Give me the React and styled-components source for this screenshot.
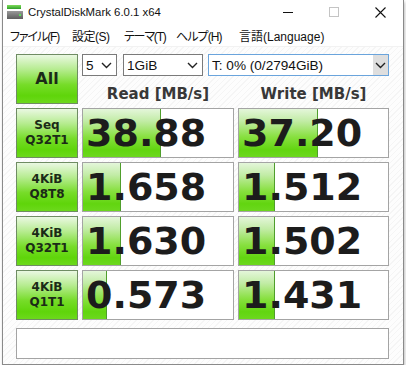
import React from 'react';
import styled, { createGlobalStyle } from 'styled-components';

const GlobalStyle = createGlobalStyle`
  html, body {
    margin: 0;
    padding: 0;
    background: #ffffff;
  }
  body {
    font-family: "Liberation Sans", "Noto Sans CJK JP", sans-serif;
  }
`;

const Window = styled.div`
  width: 400px;
  height: 364px;
  margin-left: 2px;
  border: 1px solid #8a8a8a;
  border-top: none;
  background: #ffffff;
  box-shadow: 1px 2px 3px rgba(0, 0, 0, 0.25);
  display: flex;
  flex-direction: column;
  overflow: hidden;
`;

const TitleBar = styled.div`
  flex: none;
  height: 24px;
  display: flex;
  align-items: center;
  padding-left: 3px;
`;

const Title = styled.span`
  margin-left: 4px;
  font-family: "Liberation Sans", sans-serif;
  font-size: 11.4px;
  color: #111;
`;

const Controls = styled.div`
  margin-left: auto;
  display: flex;
  align-items: center;
`;

const CtrlButton = styled.div`
  width: 46px;
  height: 24px;
  display: flex;
  align-items: center;
  justify-content: center;
`;

const MenuBar = styled.div`
  flex: none;
  height: 22px;
  display: flex;
  align-items: center;
  padding-left: 4px;
  border-bottom: 1px solid #f2f2f2;
`;

const MenuItem = styled.span`
  box-sizing: border-box;
  flex: none;
  width: ${({ $w }) => $w}px;
  padding-left: 3px;
  font-family: "Liberation Sans", "Noto Sans CJK JP", sans-serif;
  font-size: 12px;
  font-feature-settings: "palt";
  letter-spacing: ${({ $ls }) => $ls}px;
  color: #111;
  white-space: nowrap;
`;

const Client = styled.div`
  flex: 1;
  min-height: 0;
  padding: 7px 0 0 13px;
  background: repeating-linear-gradient(
    135deg,
    #fdfdfd 0px,
    #fdfdfd 3px,
    #f5f5f5 3px,
    #f5f5f5 4px
  );
`;

const Board = styled.div`
  display: grid;
  grid-template-columns: 62px 152px 151px;
  grid-template-rows: repeat(5, 50px) auto;
  column-gap: 4px;
  row-gap: 4px;
  width: 373px;
`;

const GreenButton = styled.div`
  border: 1px solid #6f8c63;
  background: linear-gradient(
    to bottom,
    #eaf8e2 0%,
    #b6ec90 30%,
    #76dc28 62%,
    #5fd50a 85%,
    #6cd91c 100%
  );
  display: flex;
  flex-direction: column;
  align-items: center;
  justify-content: center;
  font-family: "DejaVu Sans", sans-serif;
  font-weight: bold;
  font-size: ${({ $big }) => ($big ? 16 : 12)}px;
  line-height: ${({ $big }) => ($big ? 18 : 15)}px;
  color: #1b2a17;
  box-sizing: border-box;
`;

const TopRight = styled.div`
  grid-column: 2 / 4;
  display: flex;
  flex-direction: column;
`;

const ComboRow = styled.div`
  display: flex;
  height: 22px;
`;

const Combo = styled.div`
  width: ${({ $w }) => $w}px;
  margin-right: ${({ $mr }) => $mr}px;
  box-sizing: border-box;
  border: 1px solid ${({ $focus }) => ($focus ? '#6aa4dc' : '#7a7a7a')};
  background: #ffffff;
  display: flex;
  align-items: center;
  font-family: "Liberation Sans", sans-serif;
  font-size: 13.6px;
  color: #111;
`;

const ComboText = styled.span`
  flex: 1;
  padding-left: 3px;
  white-space: nowrap;
`;

const ComboArrow = styled.div`
  width: 15px;
  height: 100%;
  display: flex;
  align-items: center;
  justify-content: center;
  background: ${({ $focus }) => ($focus ? '#dedede' : 'transparent')};
  margin-right: ${({ $focus }) => ($focus ? 0 : 2)}px;
`;

const HeaderRow = styled.div`
  flex: 1;
  display: grid;
  grid-template-columns: 152px 151px;
  column-gap: 4px;
  align-items: center;
  padding-top: 8px;
`;

const Header = styled.div`
  text-align: center;
  font-family: "DejaVu Sans", sans-serif;
  font-weight: bold;
  font-size: 15px;
  color: #383838;
`;

const ValueBox = styled.div`
  position: relative;
  border: 1px solid #a4a4a4;
  background: #ffffff;
  box-sizing: border-box;
  display: flex;
  align-items: center;
  overflow: hidden;
`;

const Bar = styled.div`
  position: absolute;
  left: 0;
  top: 0;
  bottom: 0;
  border-right: 1px solid #4f9e2c;
  background: linear-gradient(
    to bottom,
    #e4f6da 0%,
    #c2eca6 25%,
    #88e040 58%,
    #62d510 85%,
    #6cd81e 100%
  );
`;

const Value = styled.span`
  position: relative;
  padding-left: 3px;
  font-family: "DejaVu Sans", sans-serif;
  font-weight: bold;
  font-size: 38px;
  line-height: 1;
  color: #1c1c1c;
`;

const Comment = styled.div`
  grid-column: 1 / 4;
  height: 31px;
  margin-top: 4px;
  border: 1px solid #a4a4a4;
  background: #ffffff;
  box-sizing: border-box;
`;

const Chevron = () => (
  <svg width="11" height="7" viewBox="0 0 11 7">
    <polyline points="1,1 5.5,5.5 10,1" fill="none" stroke="#222" strokeWidth="1.4" />
  </svg>
);

const AppIcon = () => (
  <svg width="18" height="16" viewBox="0 0 18 16">
    <defs>
      <linearGradient id="gtop" x1="0" y1="0" x2="0" y2="1">
        <stop offset="0" stopColor="#7fdc5a" />
        <stop offset="1" stopColor="#2f9e2a" />
      </linearGradient>
      <linearGradient id="gbot" x1="0" y1="0" x2="0" y2="1">
        <stop offset="0" stopColor="#9a9a9a" />
        <stop offset="1" stopColor="#5e5e5e" />
      </linearGradient>
    </defs>
    <rect x="1" y="1" width="14" height="4" fill="url(#gtop)" />
    <rect x="1" y="7" width="16" height="8" fill="url(#gbot)" />
    <rect x="13" y="10" width="2" height="2" fill="#5be05a" />
  </svg>
);

// widths set so each entry starts where the native menu puts it
const menu = [
  { label: 'ファイル(F)', w: 62, ls: -1.1 },
  { label: '設定(S)', w: 52, ls: -0.5 },
  { label: 'テーマ(T)', w: 52, ls: -1.2 },
  { label: 'ヘルプ(H)', w: 63, ls: -0.9 },
  { label: '言語(Language)', w: 90, ls: 0 },
];

const rows = [
  { label: ['Seq', 'Q32T1'], read: '38.88', readBar: 77, write: '37.20', writeBar: 78 },
  { label: ['4KiB', 'Q8T8'], read: '1.658', readBar: 37, write: '1.512', writeBar: 35 },
  { label: ['4KiB', 'Q32T1'], read: '1.630', readBar: 37, write: '1.502', writeBar: 35 },
  { label: ['4KiB', 'Q1T1'], read: '0.573', readBar: 23, write: '1.431', writeBar: 35 },
];

export default function App() {
  return (
    <>
      <GlobalStyle />
      <Window>
        <TitleBar>
          <AppIcon />
          <Title>CrystalDiskMark 6.0.1 x64</Title>
          <Controls>
            <CtrlButton>
              <svg width="10" height="10" viewBox="0 0 10 10">
                <line x1="0" y1="5.5" x2="10" y2="5.5" stroke="#111" strokeWidth="1" />
              </svg>
            </CtrlButton>
            <CtrlButton>
              <svg width="10" height="10" viewBox="0 0 10 10">
                <rect x="0.5" y="0.5" width="9" height="9" fill="none" stroke="#c4c4c4" strokeWidth="1" />
              </svg>
            </CtrlButton>
            <CtrlButton>
              <svg width="11" height="11" viewBox="0 0 11 11">
                <path d="M0.5 0.5 L10.5 10.5 M10.5 0.5 L0.5 10.5" stroke="#111" strokeWidth="1.1" />
              </svg>
            </CtrlButton>
          </Controls>
        </TitleBar>
        <MenuBar>
          {menu.map((m) => (
            <MenuItem key={m.label} $w={m.w} $ls={m.ls}>{m.label}</MenuItem>
          ))}
        </MenuBar>
        <Client>
          <Board>
            <GreenButton $big>All</GreenButton>
            <TopRight>
              <ComboRow>
                <Combo $w={35} $mr={6}>
                  <ComboText>5</ComboText>
                  <ComboArrow><Chevron /></ComboArrow>
                </Combo>
                <Combo $w={80} $mr={5}>
                  <ComboText>1GiB</ComboText>
                  <ComboArrow><Chevron /></ComboArrow>
                </Combo>
                <Combo $w={181} $mr={0} $focus>
                  <ComboText>T: 0% (0/2794GiB)</ComboText>
                  <ComboArrow $focus><Chevron /></ComboArrow>
                </Combo>
              </ComboRow>
              <HeaderRow>
                <Header>Read [MB/s]</Header>
                <Header>Write [MB/s]</Header>
              </HeaderRow>
            </TopRight>
            {rows.map((r) => (
              <React.Fragment key={r.label.join('-')}>
                <GreenButton>
                  <span>{r.label[0]}</span>
                  <span>{r.label[1]}</span>
                </GreenButton>
                <ValueBox>
                  <Bar style={{ width: `${r.readBar}px` }} />
                  <Value>{r.read}</Value>
                </ValueBox>
                <ValueBox>
                  <Bar style={{ width: `${r.writeBar}px` }} />
                  <Value>{r.write}</Value>
                </ValueBox>
              </React.Fragment>
            ))}
            <Comment />
          </Board>
        </Client>
      </Window>
    </>
  );
}
